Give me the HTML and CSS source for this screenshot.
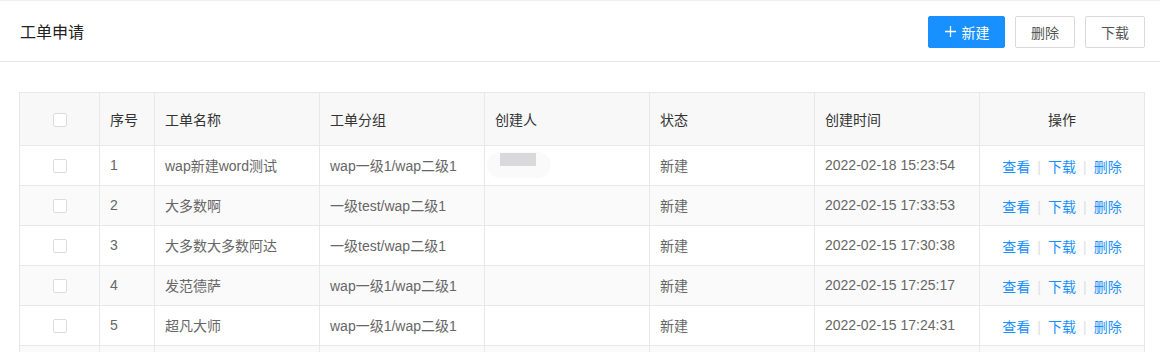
FILE: index.html
```html
<!DOCTYPE html>
<html lang="zh-CN">
<head>
<meta charset="utf-8">
<link rel="stylesheet" href="styles.css">
</head>
<body>
<div class="page">
  <div class="topbar">
    <div class="title">工单申请</div>
    <div class="actions">
      <button class="btn btn-primary"><svg class="plus" viewBox="0 0 14 14" width="13" height="13"><path d="M7 1v12M1 7h12" stroke="#fff" stroke-width="1.4" fill="none"/></svg>新建</button>
      <button class="btn btn-default">删除</button>
      <button class="btn btn-default">下载</button>
    </div>
  </div>
  <div class="content">
    <table class="grid">
      <colgroup>
        <col class="c-check"><col class="c-no"><col class="c-w"><col class="c-w"><col class="c-w"><col class="c-w"><col class="c-w"><col class="c-w">
      </colgroup>
      <thead>
        <tr>
          <th class="center"><span class="cb"></span></th>
          <th>序号</th>
          <th>工单名称</th>
          <th>工单分组</th>
          <th>创建人</th>
          <th>状态</th>
          <th>创建时间</th>
          <th class="center">操作</th>
        </tr>
      </thead>
      <tbody>
        <tr>
          <td class="center"><span class="cb"></span></td>
          <td>1</td>
          <td>wap新建word测试</td>
          <td>wap一级1/wap二级1</td>
          <td><span class="redact"><span class="redact-bar"></span></span></td>
          <td>新建</td>
          <td>2022-02-18 15:23:54</td>
          <td class="center ops"><a>查看</a><i>|</i><a>下载</a><i>|</i><a>删除</a></td>
        </tr>
        <tr class="alt">
          <td class="center"><span class="cb"></span></td>
          <td>2</td>
          <td>大多数啊</td>
          <td>一级test/wap二级1</td>
          <td></td>
          <td>新建</td>
          <td>2022-02-15 17:33:53</td>
          <td class="center ops"><a>查看</a><i>|</i><a>下载</a><i>|</i><a>删除</a></td>
        </tr>
        <tr>
          <td class="center"><span class="cb"></span></td>
          <td>3</td>
          <td>大多数大多数阿达</td>
          <td>一级test/wap二级1</td>
          <td></td>
          <td>新建</td>
          <td>2022-02-15 17:30:38</td>
          <td class="center ops"><a>查看</a><i>|</i><a>下载</a><i>|</i><a>删除</a></td>
        </tr>
        <tr class="alt">
          <td class="center"><span class="cb"></span></td>
          <td>4</td>
          <td>发范德萨</td>
          <td>wap一级1/wap二级1</td>
          <td></td>
          <td>新建</td>
          <td>2022-02-15 17:25:17</td>
          <td class="center ops"><a>查看</a><i>|</i><a>下载</a><i>|</i><a>删除</a></td>
        </tr>
        <tr>
          <td class="center"><span class="cb"></span></td>
          <td>5</td>
          <td>超凡大师</td>
          <td>wap一级1/wap二级1</td>
          <td></td>
          <td>新建</td>
          <td>2022-02-15 17:24:31</td>
          <td class="center ops"><a>查看</a><i>|</i><a>下载</a><i>|</i><a>删除</a></td>
        </tr>
        <tr class="alt">
          <td class="center"><span class="cb"></span></td>
          <td>6</td>
          <td>wap新建的word测试数据</td>
          <td>wap一级1/wap二级1</td>
          <td></td>
          <td>新建</td>
          <td>2022-02-15 17:20:12</td>
          <td class="center ops"><a>查看</a><i>|</i><a>下载</a><i>|</i><a>删除</a></td>
        </tr>
      </tbody>
    </table>
  </div>
</div>
</body>
</html>
```
FILE: styles.css
```css
html, body {
  margin: 0;
  padding: 0;
  background: #fff;
  height: 352px;
  overflow: hidden;
}
body {
  font-family: "Liberation Sans", "Noto Sans CJK SC", sans-serif;
  font-size: 14px;
  color: #333;
}
.page {
  border-top: 1px solid #eef0f4;
}
.topbar {
  height: 60px;
  border-bottom: 1px solid #e6e6e6;
  display: flex;
  align-items: center;
  justify-content: space-between;
  padding: 0 15px 0 20px;
}
.title {
  font-size: 16px;
  color: #222;
}
.actions {
  display: flex;
  gap: 10px;
  margin-top: 1px;
}
.btn {
  height: 32px;
  box-sizing: border-box;
  border-radius: 2px;
  font-family: inherit;
  font-size: 14px;
  padding: 0;
  display: flex;
  align-items: center;
  justify-content: center;
  cursor: pointer;
}
.btn-primary {
  width: 77px;
  background: #1890ff;
  border: 1px solid #1890ff;
  color: #fff;
  gap: 5px;
}
.btn-primary .plus {
  display: block;
}
.btn-default {
  width: 60px;
  background: #fff;
  border: 1px solid #d9d9de;
  color: #555;
}
.content {
  padding: 30px 0 0 19px;
}
.grid {
  border-collapse: collapse;
  table-layout: fixed;
  width: 1126px;
}
.c-check { width: 80px; }
.c-no { width: 55px; }
.c-w { width: 165px; }
.grid th, .grid td {
  border: 1px solid #e8e8e8;
  padding: 0 10px;
  text-align: left;
  white-space: nowrap;
  overflow: hidden;
}
.grid th {
  height: 52px;
  background: #f8f8f8;
  font-weight: normal;
  color: #333;
}
.grid td {
  height: 40px;
  box-sizing: border-box;
  padding-bottom: 2px;
  color: #666;
}
.grid tr.alt td {
  background: #fafafa;
}
.grid .center {
  text-align: center;
}
.cb {
  display: inline-block;
  width: 12px;
  height: 12px;
  border: 1px solid #dcdcdc;
  border-radius: 2px;
  background: #fff;
  vertical-align: middle;
}
.ops a {
  color: #1890ff;
  cursor: pointer;
}
.ops i {
  font-style: normal;
  color: #e0e0e0;
  margin: 0 7px;
}
.grid td.ops {
  padding-bottom: 0;
}
.redact {
  display: block;
  position: relative;
  width: 64px;
  height: 26px;
  margin-left: -8px;
  border-radius: 13px;
  background: #fafafa;
}
.redact-bar {
  position: absolute;
  left: 13px;
  top: 1px;
  width: 36px;
  height: 13px;
  background: #d9d9db;
}
```
